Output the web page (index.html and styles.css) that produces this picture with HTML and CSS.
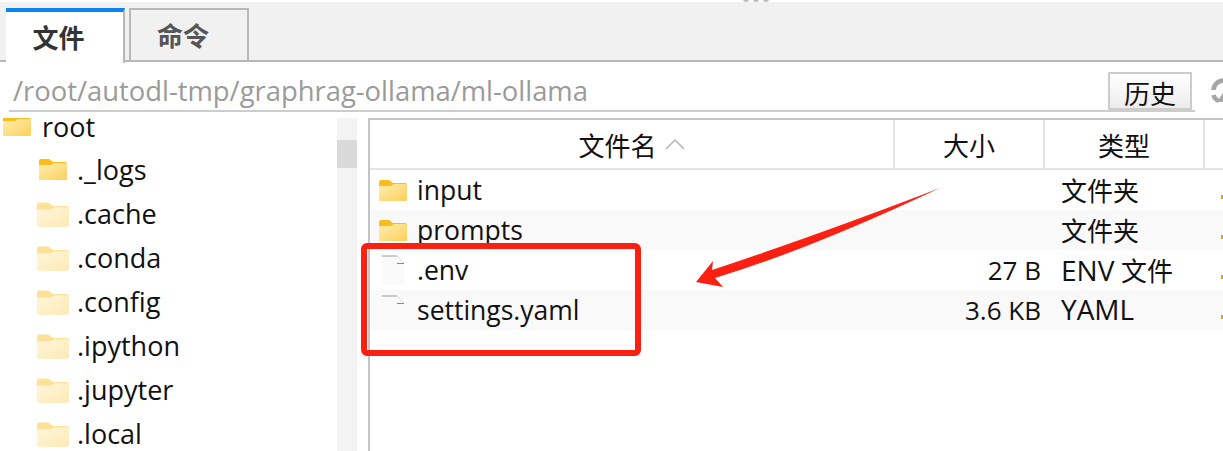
FILE: index.html
```html
<!DOCTYPE html>
<html lang="en">

<head>
    <meta charset="UTF-8">
    <title>文件</title>
    <link rel="stylesheet" href="styles.css">
</head>

<body>
    <svg class="defs" width="0" height="0">
        <symbol id="folder" viewBox="0 0 28 22">
            <path d="M0 3q0-2 2-2h8l4 3h12q2 0 2 2v14q0 2-2 2H2q-2 0-2-2z" fill="#fbbd1c" />
            <path d="M0 7h12l3-2h11q2 0 2 2v13q0 2-2 2H2q-2 0-2-2z" fill="url(#folderFill)" />
        </symbol>
        <symbol id="fileIcon" viewBox="0 0 24 30">
            <path d="M1 1h16l6 6v23H1z" fill="#fafafa" />
            <path d="M1 1h15" fill="none" stroke="#999" stroke-width="1" />
            <path d="M16 1l7 7" fill="none" stroke="#ddd" stroke-width="1" />
            <path d="M16 8.5h7" fill="none" stroke="#888" stroke-width="1" />
        </symbol>
        <defs>
            <linearGradient id="folderFill" x1="0" y1="0" x2="1" y2="1">
                <stop offset="0" stop-color="#ffeeb0" />
                <stop offset="1" stop-color="#fdcf5c" />
            </linearGradient>
        </defs>
    </svg>

    <div class="grip"><span></span><span></span><span></span></div>

    <div class="tabs">
        <div class="tab active">文件</div>
        <div class="tab">命令</div>
    </div>

    <div class="pathbar">
        <div class="path-wrap">
            <div class="path">/root/autodl-tmp/graphrag-ollama/ml-ollama</div>
            <button class="history">历史</button>
        </div>
        <svg class="refresh" width="12" height="26" viewBox="0 0 12 26">
            <path d="M12 2.5A10 10 0 0 0 2.5 12" fill="none" stroke="#a6a6a6" stroke-width="4.5" />
            <path d="M2.5 17q1 4 5 6" fill="none" stroke="#a6a6a6" stroke-width="4.5" />
            <path d="M12 15L6 24h6z" fill="#a6a6a6" />
        </svg>
    </div>

    <div class="panes">
        <div class="tree">
            <div class="tree-root">
                <svg class="folder" width="28" height="18"><use href="#folder" y="-4" width="28" height="22" /></svg>root
            </div>
            <div class="tree-item">
                <svg class="folder" width="28" height="22"><use href="#folder" /></svg>._logs
            </div>
            <div class="tree-item hidden-dir">
                <svg class="folder" width="32" height="28"><use href="#folder" /></svg>.cache
            </div>
            <div class="tree-item hidden-dir">
                <svg class="folder" width="32" height="28"><use href="#folder" /></svg>.conda
            </div>
            <div class="tree-item hidden-dir">
                <svg class="folder" width="32" height="28"><use href="#folder" /></svg>.config
            </div>
            <div class="tree-item hidden-dir">
                <svg class="folder" width="32" height="28"><use href="#folder" /></svg>.ipython
            </div>
            <div class="tree-item hidden-dir">
                <svg class="folder" width="32" height="28"><use href="#folder" /></svg>.jupyter
            </div>
            <div class="tree-item hidden-dir">
                <svg class="folder" width="32" height="28"><use href="#folder" /></svg>.local
            </div>
        </div>

        <div class="tree-scroll">
            <div class="tree-thumb"></div>
        </div>

        <div class="files">
            <div class="file-head">
                <div class="col col-name head-name">文件名
                    <svg width="20" height="11" viewBox="0 0 20 11">
                        <path d="M1 10l9-9 9 9" fill="none" stroke="#b5b5b5" stroke-width="1.5" />
                    </svg>
                </div>
                <div class="col col-size head-center">大小</div>
                <div class="col col-type head-center">类型</div>
                <div class="col col-rest"></div>
            </div>

            <div class="file-row">
                <div class="col-name cell-name"><svg class="row-icon" width="28" height="22"><use href="#folder" /></svg>input</div>
                <div class="col-size cell-size"></div>
                <div class="col-type cell-type">文件夹</div>
                <div class="col-rest cell-rest"><i></i></div>
            </div>
            <div class="file-row alt">
                <div class="col-name cell-name"><svg class="row-icon" width="28" height="22"><use href="#folder" /></svg>prompts</div>
                <div class="col-size cell-size"></div>
                <div class="col-type cell-type">文件夹</div>
                <div class="col-rest cell-rest"><i></i></div>
            </div>
            <div class="file-row">
                <div class="col-name cell-name"><svg class="row-icon" width="28" height="30"><use href="#fileIcon" /></svg>.env</div>
                <div class="col-size cell-size">27 B</div>
                <div class="col-type cell-type"><span class="caps">ENV</span> 文件</div>
                <div class="col-rest cell-rest"><i></i></div>
            </div>
            <div class="file-row alt">
                <div class="col-name cell-name"><svg class="row-icon" width="28" height="30"><use href="#fileIcon" /></svg>settings.yaml</div>
                <div class="col-size cell-size">3.6 KB</div>
                <div class="col-type cell-type"><span class="caps">YAML</span></div>
                <div class="col-rest cell-rest"><i></i></div>
            </div>
        </div>
    </div>

    <!-- red annotation drawn over the screenshot -->
    <div class="mark-box"></div>
    <svg class="mark-arrow" width="256" height="112" viewBox="0 0 256 112">
        <path d="M250 8Q125 56 22 90L23 81 6 102 33 107 25 98Q118 70 250 8z" fill="#fb2012" />
    </svg>
</body>

</html>
```

FILE: styles.css
```css
:root {
    --border-color: #b8b8b8;
    --line-color: #e4e4e4;
    --mark-color: #fb2012;
}

* {
    box-sizing: border-box;
}

html,
body {
    height: 100%;
}

body {
    margin: 0;
    position: relative;
    overflow: hidden;
    background-color: white;
    color: #111;
    font-family: "Open Sans", "Noto Sans", "Noto Sans CJK SC", sans-serif;
    font-size: 26px;
}

.defs {
    position: absolute;
}

.grip {
    position: absolute;
    top: -4px;
    left: 743px;
    display: flex;
    gap: 4px;
}

.grip span {
    width: 6px;
    height: 6px;
    border-radius: 50%;
    background-color: #bbb;
}

.tabs {
    height: 60px;
    margin-top: 2px;
    padding: 6px 0 0 6px;
    display: flex;
    gap: 4px;
    background-color: #f1f1f1;
    border-bottom: 2px solid var(--border-color);
}

.tab {
    width: 120px;
    height: 54px;
    padding-right: 12px;
    padding-bottom: 2px;
    display: flex;
    align-items: center;
    justify-content: center;
    border: 2px solid var(--border-color);
    color: #555;
    font-family: "Noto Sans CJK SC", sans-serif;
    font-weight: 700;
}

.tab.active {
    width: 119px;
    height: 55px;
    background-color: white;
    border-width: 4px 2px 0 0;
    border-top-color: #0a84f5;
    color: #333;
}

.pathbar {
    height: 50px;
    padding: 10px 0 0 9px;
    display: flex;
    align-items: flex-start;
}

.path-wrap {
    width: 1186px;
    height: 40px;
    flex: none;
    padding-right: 3px;
    display: flex;
    border-bottom: 2px solid #ccc;
}

.path {
    flex: 1;
    padding-left: 4px;
    color: #9a9a9a;
    font-size: 27.4px;
    line-height: 38px;
    white-space: nowrap;
}

.history {
    width: 84px;
    height: 38px;
    flex: none;
    padding: 0 0 2px;
    border: 2px solid #ccc;
    background: linear-gradient(#fff, #ececec);
    color: #111;
    font-family: "Noto Sans CJK SC", sans-serif;
    font-size: 26px;
}

.refresh {
    flex: none;
    margin-left: 16px;
    margin-top: 6px;
}

.panes {
    height: 339px;
    display: flex;
}

.tree {
    width: 337px;
    flex: none;
    padding-left: 3px;
    font-size: 27px;
    line-height: 30px;
}

.tree-root,
.tree-item {
    height: 44px;
    display: flex;
    align-items: center;
}

.tree-root {
    height: 30px;
    margin-bottom: 7px;
}

.tree-root .folder {
    margin-right: 11px;
}

.tree-item {
    padding-left: 36px;
    padding-bottom: 2px;
}

.tree-item .folder {
    margin-right: 10px;
    margin-top: -2px;
}

.hidden-dir .folder {
    opacity: 0.45;
    margin-left: -2px;
    margin-right: 8px;
    margin-top: 0;
}

.tree-scroll {
    width: 20px;
    flex: none;
    margin-top: 6px;
    margin-right: 11px;
    background-color: #f3f3f3;
}

.tree-thumb {
    height: 28px;
    margin-top: 22px;
    background-color: #d9d9d9;
}

.files {
    flex: 1;
    min-width: 0;
    margin-top: 6px;
    border-left: 2px solid #c4c4c4;
    border-top: 2px solid #c4c4c4;
}

.file-head {
    height: 50px;
    display: flex;
    border-bottom: 2px solid var(--line-color);
}

.col {
    border-right: 2px solid var(--line-color);
}

.col-name {
    width: 525px;
    flex: none;
}

.col-size {
    width: 150px;
    flex: none;
}

.col-type {
    width: 160px;
    flex: none;
}

.col-rest {
    flex: 1;
    border-right: none;
}

.head-name,
.head-center {
    display: flex;
    align-items: center;
    justify-content: center;
    gap: 8px;
    font-family: "Noto Sans CJK SC", sans-serif;
}

.file-row {
    height: 40px;
    display: flex;
    align-items: center;
    white-space: nowrap;
}

.file-row.alt {
    background-color: #f9f9f9;
}

.cell-name {
    display: flex;
    align-items: center;
    padding-left: 9px;
    font-size: 26.5px;
}

.row-icon {
    margin-right: 10px;
}

.cell-size {
    padding-right: 4px;
    text-align: right;
}

.cell-type {
    padding-left: 16px;
}

.caps {
    font-size: 28px;
    line-height: 1;
}

.cell-rest {
    height: 100%;
    display: flex;
    align-items: flex-end;
    justify-content: flex-end;
    padding-bottom: 11px;
}

.cell-rest i {
    width: 2px;
    height: 4px;
    background-color: #e8a020;
}

.mark-box {
    position: absolute;
    left: 361px;
    top: 243px;
    width: 280px;
    height: 113px;
    border: 6px solid var(--mark-color);
    border-radius: 6px;
}

.mark-arrow {
    position: absolute;
    left: 690px;
    top: 180px;
}
```
